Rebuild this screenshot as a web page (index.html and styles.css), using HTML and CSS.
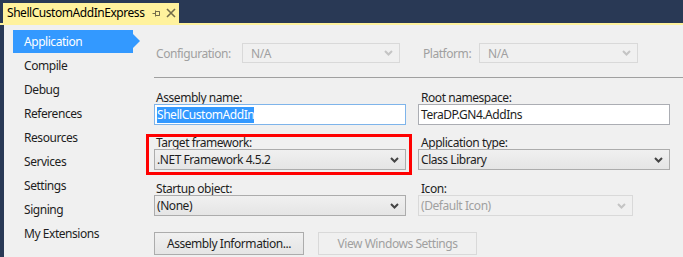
FILE: index.html
```html
<!DOCTYPE html>
<html>
<head>
<meta charset="utf-8">
<link rel="stylesheet" href="styles.css">
</head>
<body>
<div class="window">
  <div class="tabbar">
    <div class="tab">
      <span class="tab-title">ShellCustomAddInExpress</span>
      <svg class="pin" width="9" height="9" viewBox="0 0 9 9"><path d="M0.5 4.5H3.5M3.5 1.5V7.5M3.5 2.5H7.5V6.5H3.5M7.5 2.5V6.5" stroke="#736c4a" stroke-width="1" fill="none"/></svg>
      <svg class="close" width="10" height="10" viewBox="0 0 10 10"><path d="M1 1L9 9M9 1L1 9" stroke="#736c4a" stroke-width="1.6" fill="none"/></svg>
    </div>
  </div>
  <div class="tabline"></div>
  <div class="main">
    <nav class="sidebar">
      <div class="nav-item active">Application</div>
      <div class="nav-item">Compile</div>
      <div class="nav-item">Debug</div>
      <div class="nav-item">References</div>
      <div class="nav-item">Resources</div>
      <div class="nav-item">Services</div>
      <div class="nav-item">Settings</div>
      <div class="nav-item">Signing</div>
      <div class="nav-item">My Extensions</div>
    </nav>
    <section class="content">
      <div class="config-row">
        <span class="dim-label cfg-label">Configuration:</span>
        <div class="select disabled cfg-select"><span>N/A</span><svg class="chev" width="9" height="6" viewBox="0 0 9 6"><path d="M1 1L4.5 4.5L8 1" stroke="#c4c4c4" stroke-width="2" fill="none"/></svg></div>
        <span class="dim-label plat-label">Platform:</span>
        <div class="select disabled plat-select"><span>N/A</span><svg class="chev" width="9" height="6" viewBox="0 0 9 6"><path d="M1 1L4.5 4.5L8 1" stroke="#c4c4c4" stroke-width="2" fill="none"/></svg></div>
      </div>
      <div class="rule"></div>
      <div class="form-grid">
        <label class="lbl">Assembly name:</label>
        <label class="lbl lbl2">Root namespace:</label>
        <div class="input focus"><span class="sel">ShellCustomAddIn</span></div>
        <div class="input"><span>TeraDP.GN4.AddIns</span></div>

        <label class="lbl gap-a">Target framework:</label>
        <label class="lbl lbl2 gap-a">Application type:</label>
        <div class="select"><span>.NET Framework 4.5.2</span><svg class="chev" width="9" height="6" viewBox="0 0 9 6"><path d="M1 1L4.5 4.5L8 1" stroke="#444" stroke-width="2" fill="none"/></svg></div>
        <div class="select"><span>Class Library</span><svg class="chev" width="9" height="6" viewBox="0 0 9 6"><path d="M1 1L4.5 4.5L8 1" stroke="#444" stroke-width="2" fill="none"/></svg></div>

        <label class="lbl gap-b">Startup object:</label>
        <label class="lbl lbl2 gap-b">Icon:</label>
        <div class="select"><span>(None)</span><svg class="chev" width="9" height="6" viewBox="0 0 9 6"><path d="M1 1L4.5 4.5L8 1" stroke="#444" stroke-width="2" fill="none"/></svg></div>
        <div class="select disabled icon-select"><span>(Default Icon)</span><svg class="chev" width="9" height="6" viewBox="0 0 9 6"><path d="M1 1L4.5 4.5L8 1" stroke="#c4c4c4" stroke-width="2" fill="none"/></svg></div>
      </div>
      <div class="buttons">
        <div class="btn">Assembly Information...</div>
        <div class="btn disabled">View Windows Settings</div>
      </div>
      <div class="highlight-box"></div>
    </section>
  </div>
</div>
</body>
</html>
```

FILE: styles.css
```css
* { box-sizing: border-box; }
html, body { margin: 0; padding: 0; }
body {
  width: 683px;
  height: 257px;
  overflow: hidden;
  background: #f0f0f0;
  font-family: "Noto Sans", "Open Sans", sans-serif;
  font-size: 12px;
  letter-spacing: -0.45px;
  color: #1e1e1e;
}
.window { width: 683px; height: 257px; }
.tabbar {
  height: 23px;
  background: #293955;
  padding: 3px 0 0 3px;
  display: flex;
}
.tab {
  width: 176px;
  height: 20px;
  background: #fff29d;
  display: flex;
  align-items: center;
  padding-left: 4px;
}
.tab-title { line-height: 20px; color: #000; }
.pin { margin-left: 8px; }
.close { margin-left: 5px; }
.tabline { height: 2px; background: #fff29d; }
.main {
  display: flex;
  height: 232px;
  border-left: 4px solid #293955;
}
.sidebar {
  width: 150px;
  padding: 5px 0 0 9px;
  flex: none;
}
.nav-item {
  height: 24px;
  line-height: 24px;
  padding-left: 11px;
  width: 120px;
  color: #1e1e1e;
  position: relative;
}
.nav-item.active {
  background: #3399ff;
  color: #fff;
  height: 23px;
  line-height: 23px;
  margin-bottom: 1px;
}
.nav-item.active::after {
  content: "";
  position: absolute;
  right: -7px;
  top: 4px;
  border-left: 7px solid #3399ff;
  border-top: 7.5px solid transparent;
  border-bottom: 7.5px solid transparent;
}
.content {
  position: relative;
  flex: 1;
  padding-top: 18px;
}
.config-row {
  display: flex;
  align-items: center;
  height: 20px;
}
.dim-label { color: #a0a0a0; }
.cfg-label { margin-left: 2px; width: 86px; }
.cfg-select { width: 158px; }
.plat-label { margin-left: 23px; width: 56px; }
.plat-select { width: 159px; }
.rule {
  margin-top: 14px;
  height: 1px;
  background: #a0a0a0;
}
.form-grid {
  display: grid;
  grid-template-columns: 252px 252px;
  column-gap: 12px;
}
.lbl {
  height: 18px;
  line-height: 16px;
  padding-top: 4px;
  padding-left: 2px;
  margin-top: 8px;
}
.lbl2 { padding-left: 3px; }
.gap-a { margin-top: 6px; }
.gap-b { margin-top: 7px; }
.input {
  height: 21px;
  border: 1px solid #abadb3;
  background: #fff;
  padding-left: 2px;
  line-height: 18px;
  display: flex;
  align-items: center;
}
.input.focus { border-color: #7eb4ea; }
.sel { background: #3399ff; color: #fff; line-height: 16px; }
.select {
  height: 21px;
  border: 1px solid #acacac;
  background: linear-gradient(#f0f0f0, #e5e5e5);
  display: flex;
  align-items: center;
  justify-content: space-between;
  padding: 0 6px 0 2px;
  color: #1e1e1e;
}
.select.disabled {
  background: #f0f0f0;
  border-color: #d9d9d9;
  color: #a0a0a0;
}
.config-row .select { height: 20px; padding-left: 8px; }
.icon-select { width: 215px; }
.buttons {
  display: flex;
  margin-top: 16px;
  gap: 14px;
}
.btn {
  height: 23px;
  line-height: 21px;
  border: 1px solid #acacac;
  background: linear-gradient(#f0f0f0, #e5e5e5);
  text-align: center;
  width: 150px;
}
.btn.disabled {
  width: 159px;
  border-color: #d9d9d9;
  background: #f0f0f0;
  color: #a0a0a0;
}
.highlight-box {
  position: absolute;
  left: -8px;
  top: 109px;
  width: 266px;
  height: 41px;
  border: 3px solid #ff0000;
}
```
